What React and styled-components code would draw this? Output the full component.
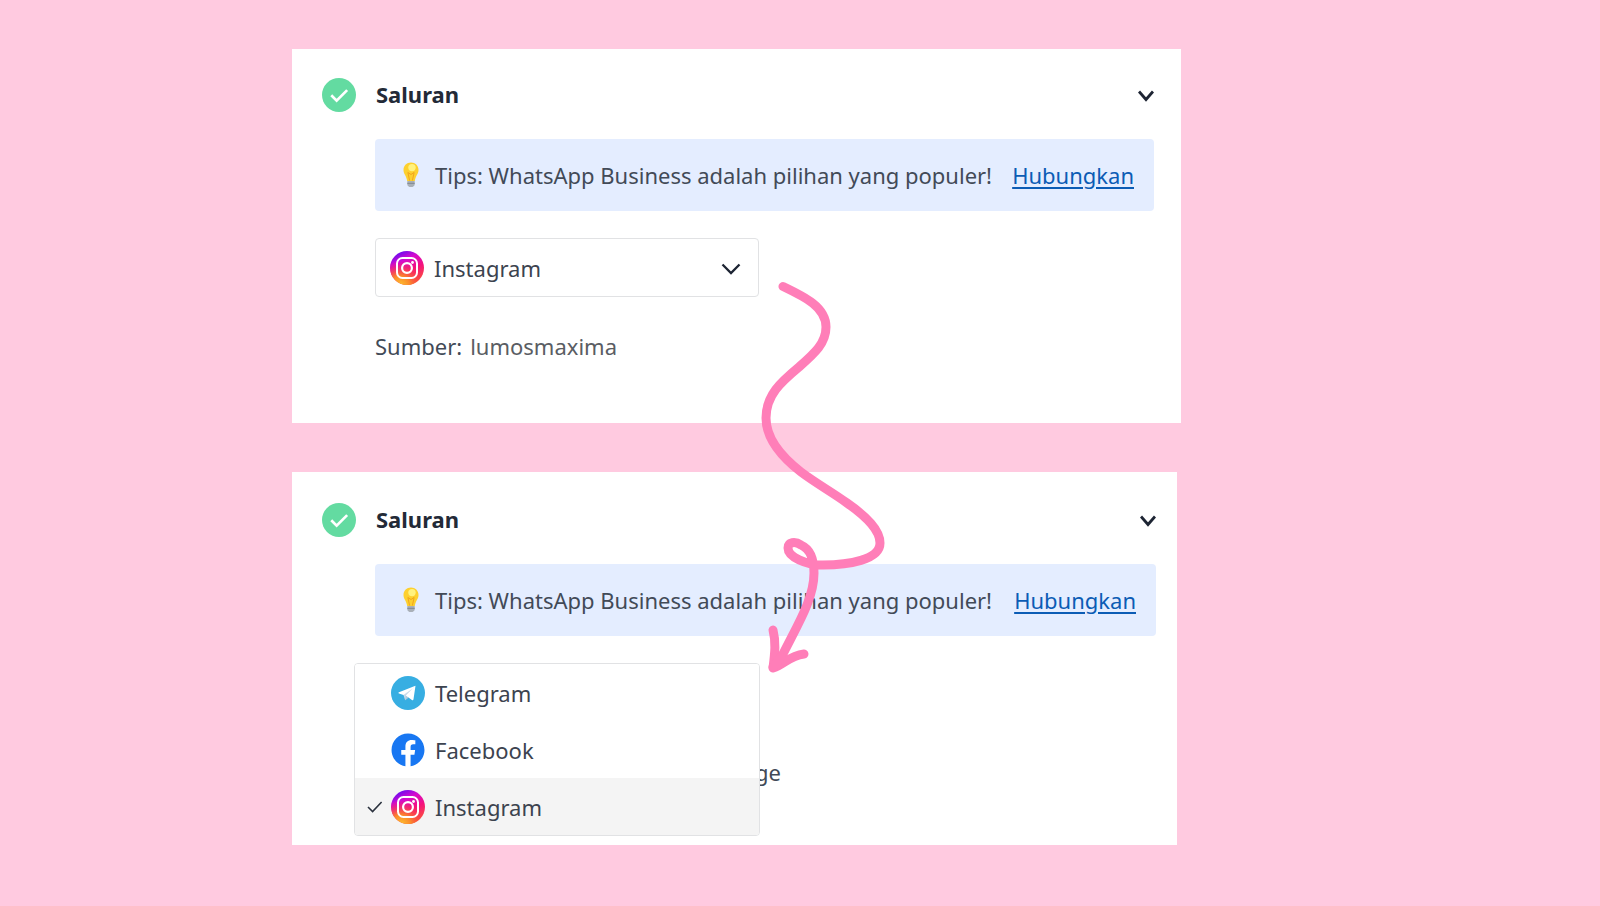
import React, { useId, useState } from "react";
import styled, { createGlobalStyle } from "styled-components";
import { FaFacebook } from "react-icons/fa";

const GlobalStyle = createGlobalStyle`
  * {
    box-sizing: border-box;
  }
  body {
    margin: 0;
    background: #ffcae0;
    font-family: "Noto Sans", "Liberation Sans", sans-serif;
    font-size: 22px;
    line-height: 32px;
    color: #424a57;
  }
`;

const Page = styled.main`
  display: grid;
  grid-template-columns: 292fr 889fr 419fr;
  min-height: 100vh;
  padding-top: 49px;
`;

const Stack = styled.div`
  grid-column: 2;
  position: relative;
  display: flex;
  flex-direction: column;
  gap: 49px;
`;

const Card = styled.section`
  background: #fff;
  padding: 29px 27px 61px 30px;
`;

const OpenCard = styled(Card)`
  margin-right: 4px;
  padding: 31px 21px 57px 30px;
`;

const Header = styled.header`
  display: flex;
  align-items: center;
  gap: 20px;
  height: 34px;
`;

const Title = styled.h2`
  flex: 1;
  margin: 0;
  padding-bottom: 2px;
  font-size: 22px;
  font-weight: 700;
  color: #232a37;
`;

const ToggleButton = styled.button`
  display: flex;
  margin: 0;
  padding: 2px 0 0;
  border: 0;
  background: none;
  color: #1d2433;
  cursor: pointer;
`;

const Body = styled.div`
  position: relative;
  margin: 27px 0 0 53px;
`;

const Tip = styled.p`
  display: flex;
  align-items: center;
  height: 72px;
  margin: 0;
  padding: 0 20px 0 28px;
  border-radius: 4px;
  background: #e4edff;
  white-space: nowrap;
`;

const TipText = styled.span`
  flex: 1;
  margin-left: 16px;
`;

const TipLink = styled.a`
  color: #0b5cb5;
  text-decoration: underline;
  text-decoration-thickness: 2px;
  text-underline-offset: 3px;
`;

const SelectBox = styled.div`
  display: grid;
  grid-template-columns: 60px 1fr 38px;
  align-items: center;
  width: 384px;
  height: 59px;
  margin-top: 27px;
  color: #1d2433;

  svg {
    grid-row: 1;
    pointer-events: none;
    z-index: 1;
  }
  svg:first-of-type {
    grid-column: 1;
    margin-left: 15px;
  }
  svg:last-of-type {
    grid-column: 3;
    margin-top: 3px;
  }
`;

const Select = styled.select`
  grid-row: 1;
  grid-column: 1 / 4;
  width: 100%;
  height: 59px;
  padding: 0 40px 0 58px;
  border: 1px solid #e1e2e4;
  border-radius: 4px;
  appearance: none;
  background: #fff;
  font: inherit;
  color: #3c434f;
`;

const Source = styled.p`
  display: flex;
  gap: 8px;
  margin: 33px 0 0;
`;

const SourceName = styled.span`
  color: #5a5d63;
`;

const HiddenSource = styled.p`
  margin: 0;
  padding: 120px 0 0 380px;
`;

const Menu = styled.ul`
  position: absolute;
  top: 99px;
  left: -21px;
  width: 406px;
  margin: 0;
  padding: 0;
  overflow: hidden;
  border: 1px solid #e1e2e4;
  border-radius: 4px;
  background: #fff;
  list-style: none;
`;

const MenuItem = styled.button`
  display: grid;
  grid-template-columns: 14px 34px 1fr;
  gap: 10px;
  align-items: center;
  width: 100%;
  height: 57px;
  padding: 0 12px;
  border: 0;
  background: ${props => (props["aria-selected"] ? "#f4f4f4" : "#fff")};
  font: inherit;
  color: #3c434f;
  text-align: left;
  cursor: pointer;
`;

const Arrow = styled.svg`
  position: absolute;
  top: 227px;
  left: 468px;
  pointer-events: none;
`;

const DoneIcon = () => (
  <svg width="34" height="34" viewBox="0 0 33 33" fill="none" aria-hidden="true">
    <circle cx="16.5" cy="16.5" r="16.5" fill="#63dba1" />
    <path d="M9 16.8l5.2 5.2L24.4 11.8" stroke="#fff" strokeWidth="2.6" />
  </svg>
);

const HeaderChevron = () => (
  <svg width="16" height="12" viewBox="0 0 16 12" fill="none" aria-hidden="true">
    <path d="M1 1.5l7 8 7-8" stroke="currentColor" strokeWidth="2.8" />
  </svg>
);

const SelectChevron = () => (
  <svg width="20" height="12" viewBox="0 0 20 12" fill="none" aria-hidden="true">
    <path d="M1.5 1.5L10 10l8.500-8.500" stroke="currentColor" strokeWidth="2.3" />
  </svg>
);

const CheckIcon = () => (
  <svg width="16" height="12" viewBox="0 0 16 12" fill="none" aria-hidden="true">
    <path d="M1 6l4.600 4.600L14.600 1" stroke="#2b323e" strokeWidth="1.6" />
  </svg>
);

const BulbIcon = () => (
  <svg width="16" height="26" viewBox="0 0 16 26" aria-hidden="true">
    <path d="M4.300 19h7.400v3.400c0 1.500-1.500 2.600-3.700 2.600s-3.700-1.100-3.700-2.600z" fill="#a9b0b8" />
    <path d="M4.300 21.300h7.400" stroke="#7f878f" strokeWidth="1" />
    <path d="M8 .500C3.700.500.500 3.700.500 7.900c0 4.100 3 5.800 3.700 11.100h7.600c.700-5.300 3.700-7 3.700-11.100C15.500 3.700 12.300.500 8 .500z" fill="#fdd02f" />
    <path d="M6.600 18.500L4.900 10.500l3.100 2 3.100-2-1.700 8" stroke="#f0a51c" strokeWidth="1" fill="none" />
    <circle cx="9" cy="5.600" r="3.700" fill="#fff27e" />
  </svg>
);

const InstagramIcon = () => {
  const id = useId();
  return (
    <svg width="34" height="34" viewBox="0 0 34 34" fill="none" aria-hidden="true">
      <defs>
        <linearGradient id={`${id}a`} x1="8" y1="0" x2="24" y2="34" gradientUnits="userSpaceOnUse">
          <stop offset="0" stopColor="#5a0cf5" />
          <stop offset="0.280" stopColor="#d20bd0" />
          <stop offset="0.600" stopColor="#f5127c" />
          <stop offset="1" stopColor="#fb5a35" />
        </linearGradient>
        <radialGradient id={`${id}b`} cx="10" cy="35" r="25" gradientUnits="userSpaceOnUse">
          <stop offset="0" stopColor="#fdc52f" />
          <stop offset="0.400" stopColor="#fb8a2b" />
          <stop offset="1" stopColor="#f91e50" stopOpacity="0" />
        </radialGradient>
      </defs>
      <circle cx="17" cy="17" r="17" fill={`url(#${id}a)`} />
      <circle cx="17" cy="17" r="17" fill={`url(#${id}b)`} />
      <rect x="7" y="7" width="20" height="20" rx="5.500" stroke="#fff" strokeWidth="2" />
      <circle cx="17" cy="17" r="4.900" stroke="#fff" strokeWidth="2.2" />
      <circle cx="22.500" cy="11.500" r="1.400" fill="#fff" />
    </svg>
  );
};

const TelegramIcon = () => (
  <svg width="34" height="34" viewBox="0 0 34 34" aria-hidden="true">
    <circle cx="17" cy="17" r="17" fill="#37aee2" />
    <path d="M12.300 18.600L24.500 9.700 14.200 24.200z" fill="#c8daea" />
    <path d="M14.200 24.200l.600-4.600 2.700 2.100z" fill="#a9c9dd" />
    <path d="M14.800 19.600l9.600-9.800L8 16.200c-.800.300-.700.900 0 1.200l4.500 1.500 9.500-6.600zM14.800 19.600l6.100 4.400c.800.400 1.400.100 1.600-.700l2-13.500z" fill="#fff" />
  </svg>
);

const channels = [
  { name: "Telegram", icon: <TelegramIcon /> },
  { name: "Facebook", icon: <FaFacebook size={34} color="#1877f2" aria-hidden="true" /> },
  { name: "Instagram", icon: <InstagramIcon /> }
];

const CardHeader = () => (
  <Header>
    <DoneIcon />
    <Title>Saluran</Title>
    <ToggleButton type="button" aria-label="Saluran">
      <HeaderChevron />
    </ToggleButton>
  </Header>
);

const WhatsAppTip = () => (
  <Tip>
    <BulbIcon />
    <TipText>Tips: WhatsApp Business adalah pilihan yang populer!</TipText>
    <TipLink href="#hubungkan">Hubungkan</TipLink>
  </Tip>
);

export default () => {
  const [channel, setChannel] = useState("Instagram");
  const current = channels.find(({ name }) => name === channel);

  return (
    <Page>
      <GlobalStyle />
      <Stack>
        <Card>
          <CardHeader />
          <Body>
            <WhatsAppTip />
            <SelectBox>
              {current.icon}
              <Select
                aria-label="Saluran"
                value={channel}
                onChange={event => setChannel(event.target.value)}
              >
                {channels.map(({ name }) => (
                  <option key={name}>{name}</option>
                ))}
              </Select>
              <SelectChevron />
            </SelectBox>
            <Source>
              Sumber: <SourceName>lumosmaxima</SourceName>
            </Source>
          </Body>
        </Card>
        <OpenCard>
          <CardHeader />
          <Body>
            <WhatsAppTip />
            <HiddenSource>ge</HiddenSource>
            <Menu role="listbox" aria-label="Saluran">
              {channels.map(({ name, icon }) => (
                <li key={name} role="presentation">
                  <MenuItem
                    type="button"
                    role="option"
                    aria-selected={name === channel}
                    onClick={() => setChannel(name)}
                  >
                    {name === channel ? <CheckIcon /> : <span />}
                    {icon}
                    {name}
                  </MenuItem>
                </li>
              ))}
            </Menu>
          </Body>
        </OpenCard>
        <Arrow width="140" height="410" viewBox="760 276 140 410" fill="none" aria-hidden="true">
          <g stroke="#ff7eb8" strokeWidth="9" strokeLinecap="round" strokeLinejoin="round">
            <path d="M783 286.500C805 297 826 307 826 327C826 343 815 353 799 367C781 382 766 395 766 418C766 439 783 458 801 472C817 484 832 492 847 503C867 517 880 530 880 543C880 560 848 565 823 565C806 565 788 557 788 548C788 542 795 541 801 545C810 549 814 560 814 573C814 600 796 627 781 658" />
            <path d="M773 630C776 642 775 652 773 668C785 664 789 656 804 654" />
            <path d="M773 667L781 657" />
          </g>
        </Arrow>
      </Stack>
    </Page>
  );
};
